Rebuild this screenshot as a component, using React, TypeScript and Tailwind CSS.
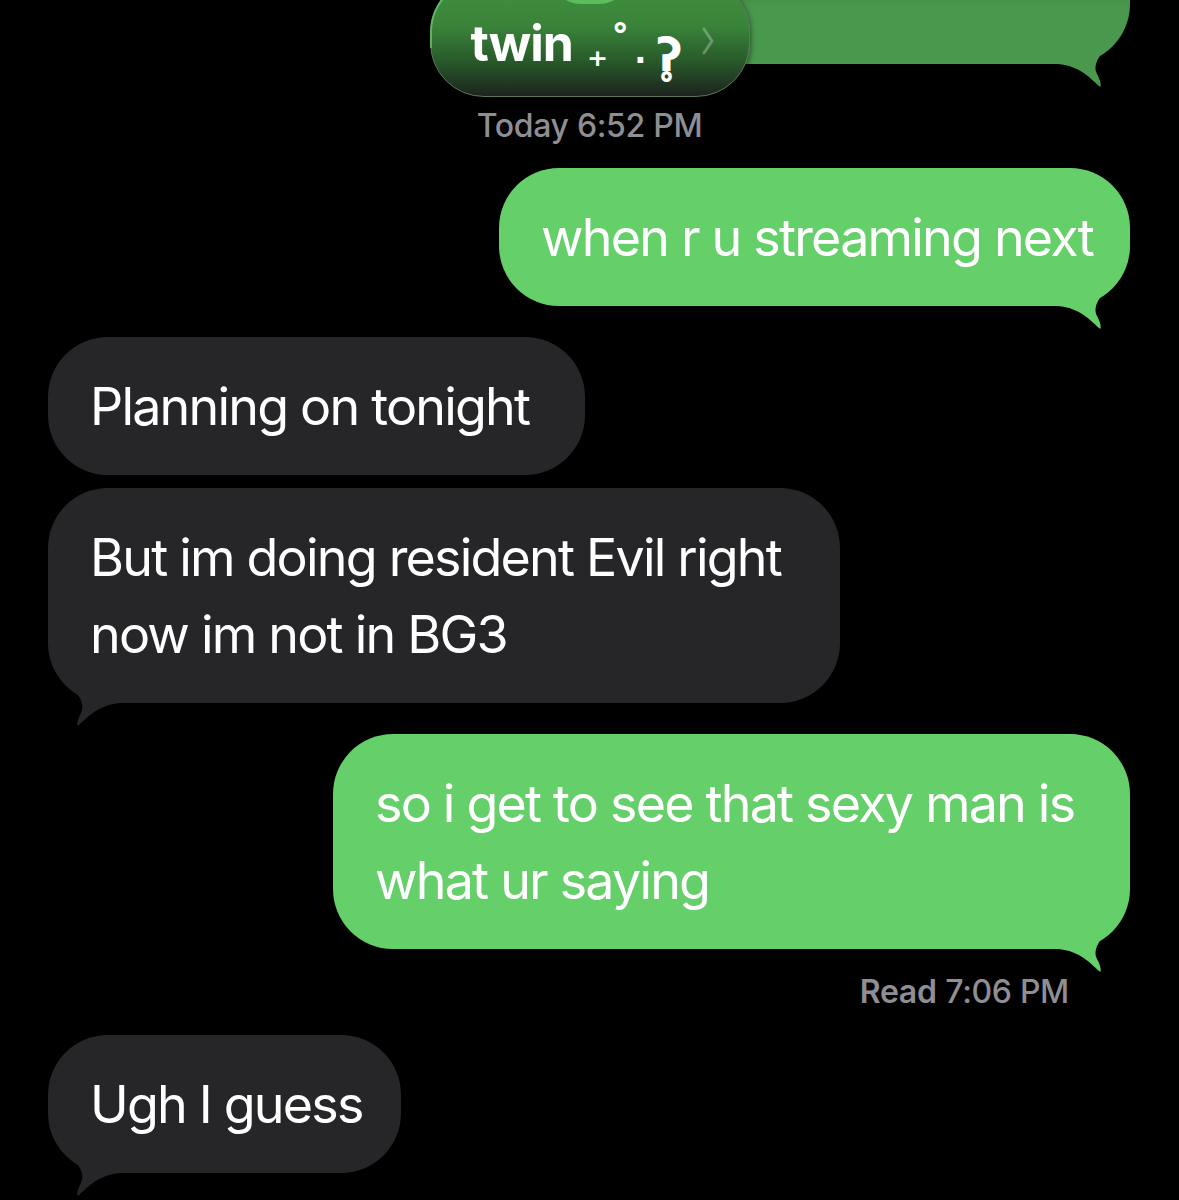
import React from "react";

const FONT = { fontFamily: "Inter, 'Noto Sans', sans-serif" };
const DJ = { fontFamily: "'DejaVu Sans', sans-serif" };

function Tail({ side, color }: { side: "left" | "right"; color: string }) {
  return (
    <svg
      width="80"
      height="70"
      viewBox="0 0 80 70"
      className={
        side === "right"
          ? "absolute right-0 bottom-[-30px]"
          : "absolute left-0 bottom-[-30px] -scale-x-100"
      }
    >
      <path
        d="M8,10 L8,40 C30,42 40,54 49,62 C52,65 51,57 47,50 C42,40 50,28 72,8 L8,8 Z"
        fill={color}
      />
    </svg>
  );
}

function Bubble({
  side,
  tail,
  lines,
  width,
}: {
  side: "left" | "right";
  tail?: boolean;
  lines: string[];
  width: number;
}) {
  const color = side === "right" ? "#65cf6a" : "#262629";
  return (
    <div
      className={
        "relative rounded-[60px] py-[30.5px] pl-[42px] pr-[30px] text-[52px] leading-[77px] text-white whitespace-nowrap tracking-[-1.8px] " +
        (side === "right" ? "self-end bg-[#65cf6a]" : "self-start bg-[#262629]")
      }
      style={{ width }}
    >
      {tail && <Tail side={side} color={color} />}
      <div className="relative">
        {lines.map((l, i) => (
          <div key={i}>{l}</div>
        ))}
      </div>
    </div>
  );
}

export default function App() {
  return (
    <div className="relative h-[1200px] w-[1179px] overflow-hidden bg-black" style={FONT}>
      {/* previous (dimmed) outgoing bubble */}
      <div className="relative ml-[440px] mt-[-60px] h-[124px] w-[690px] rounded-[60px] bg-[linear-gradient(180deg,#2b6630_0%,#3a8140_30%,#4a984d_55%,#4a984d_100%)]">
        <Tail side="right" color="#4a984d" />
      </div>

      {/* header overlay: contact pill + date */}
      <div className="absolute left-0 right-0 top-0 flex flex-col items-center">
        <div className="relative mt-[-22px] flex h-[119px] w-[320px] items-end rounded-[54px] border-[1.5px] border-[#587858] bg-[linear-gradient(180deg,#41923f_0%,#3a833a_40%,#285a2a_70%,#1d231e_100%)] pb-[28px] pl-[40px] shadow-[0_2px_6px_rgba(0,0,0,0.6)]">
          <div className="pointer-events-none absolute left-[-1px] top-[-1px] h-[70px] w-[60px] rounded-tl-[54px] border-l-[2px] border-t-[2px] border-[#72dc72]/60" />
          <span className="text-[50px] font-bold leading-none tracking-[-0.02em] text-white">twin</span>
          <span className="ml-[14px] mb-[-4px] text-[40px] font-bold leading-none text-white" style={DJ}>
            ₊
          </span>
          <span className="ml-[2px] mb-[4px] text-[40px] font-bold leading-none text-white" style={DJ}>
            ˚
          </span>
          <span className="ml-[4px] text-[32px] font-bold leading-none text-white" style={DJ}>
            .
          </span>
          <span className="ml-[10px] mb-[-10px] text-[46px] font-bold leading-none text-white" style={DJ}>
            ʔ̥
          </span>
          <svg width="14" height="30" viewBox="0 0 14 30" className="mb-[12px] ml-[18px]">
            <path d="M3,3 L11,15 L3,27" stroke="rgba(255,255,255,0.28)" strokeWidth="3" fill="none" strokeLinecap="round" strokeLinejoin="round" />
          </svg>
        </div>
        <div className="absolute top-[-58px] h-[62px] w-[80px] rounded-full bg-[#5bbd5c]" />
        <div className="mt-[12px] text-[32px] font-medium leading-[34px] tracking-[-0.01em] text-[#8e8e93]">
          Today 6:52 PM
        </div>
      </div>

      {/* messages */}
      <div className="flex flex-col pl-[48px] pr-[49px] pt-[104px]">
        <Bubble side="right" tail lines={["when r u streaming next"]} width={631} />
        <div className="h-[31px]" />
        <Bubble side="left" lines={["Planning on tonight"]} width={537} />
        <div className="h-[13px]" />
        <Bubble side="left" tail lines={["But im doing resident Evil right", "now im not in BG3"]} width={792} />
        <div className="h-[31px]" />
        <Bubble side="right" tail lines={["so i get to see that sexy man is", "what ur saying"]} width={797} />
        <div className="mr-[61px] mt-[26px] self-end text-[32px] leading-[34px] tracking-[-0.01em] text-[#8e8e93]">
          <span className="font-semibold">Read</span> <span className="font-medium">7:06 PM</span>
        </div>
        <div className="h-[26px]" />
        <Bubble side="left" tail lines={["Ugh I guess"]} width={353} />
      </div>
    </div>
  );
}
